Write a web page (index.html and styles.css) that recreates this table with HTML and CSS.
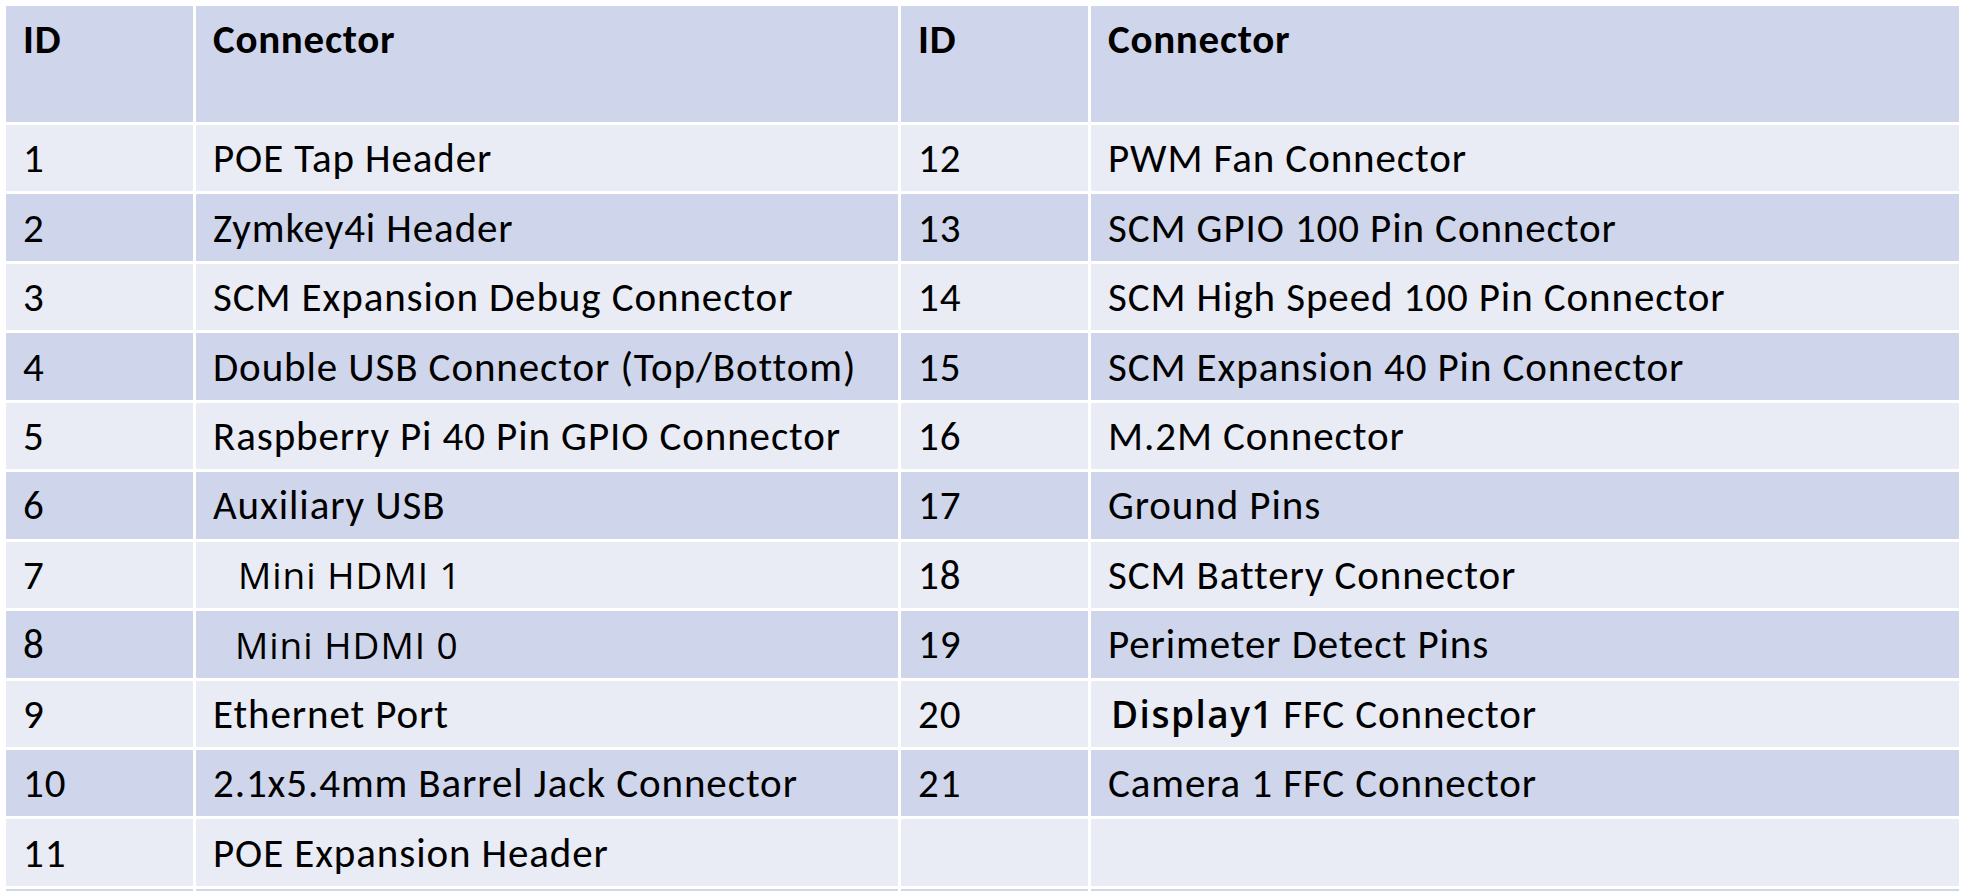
FILE: index.html
```html
<!DOCTYPE html>
<html>
<head>
<meta charset="utf-8">
<link rel="stylesheet" href="styles.css">
</head>
<body>
<div class="table">
  <div class="cell head">ID</div><div class="cell head">Connector</div><div class="cell head">ID</div><div class="cell head">Connector</div>

  <div class="cell light">1</div><div class="cell light">POE Tap Header</div><div class="cell light">12</div><div class="cell light">PWM Fan Connector</div>
  <div class="cell dark">2</div><div class="cell dark">Zymkey4i Header</div><div class="cell dark">13</div><div class="cell dark">SCM GPIO 100 Pin Connector</div>
  <div class="cell light">3</div><div class="cell light">SCM Expansion Debug Connector</div><div class="cell light">14</div><div class="cell light">SCM High Speed 100 Pin Connector</div>
  <div class="cell dark">4</div><div class="cell dark">Double USB Connector (Top/Bottom)</div><div class="cell dark">15</div><div class="cell dark">SCM Expansion 40 Pin Connector</div>
  <div class="cell light">5</div><div class="cell light">Raspberry Pi 40 Pin GPIO Connector</div><div class="cell light">16</div><div class="cell light">M.2M Connector</div>
  <div class="cell dark">6</div><div class="cell dark">Auxiliary USB</div><div class="cell dark">17</div><div class="cell dark">Ground Pins</div>
  <div class="cell light">7</div><div class="cell light"><span class="alt indent"><span class="thin">Mini</span> HDMI 1</span></div><div class="cell light">18</div><div class="cell light">SCM Battery Connector</div>
  <div class="cell dark">8</div><div class="cell dark"><span class="alt indent2"><span class="thin">Mini</span> HDMI 0</span></div><div class="cell dark">19</div><div class="cell dark">Perimeter Detect Pins</div>
  <div class="cell light">9</div><div class="cell light">Ethernet Port</div><div class="cell light">20</div><div class="cell light"><span class="alt2">Display1</span><span>FFC Connector</span></div>
  <div class="cell dark">10</div><div class="cell dark">2.1x5.4mm Barrel Jack Connector</div><div class="cell dark">21</div><div class="cell dark">Camera 1 FFC Connector</div>
  <div class="cell light">11</div><div class="cell light">POE Expansion Header</div><div class="cell light"></div><div class="cell light"></div>
  <div class="cell dark"></div><div class="cell dark"></div><div class="cell dark"></div><div class="cell dark"></div>
</div>
</body>
</html>
```
FILE: styles.css
```css
html, body {
  margin: 0;
  padding: 0;
  background: #ffffff;
  overflow: hidden;
}

body {
  padding: 6px 0 0 6px;
  font-family: "Carlito", "Lato", "Liberation Sans", sans-serif;
  color: #000000;
}

.table {
  display: grid;
  grid-template-columns: 187px 702px 187px 868px;
  grid-template-rows: 116px;
  grid-auto-rows: 66.45px;
  column-gap: 3px;
  row-gap: 3px;
  width: max-content;
}

.cell {
  display: flex;
  align-items: center;
  padding: 0 0 0 17px;
  font-size: 41px;
  letter-spacing: 0.9px;
  white-space: nowrap;
  overflow: hidden;
}

.head {
  background: #cfd5ea;
  align-items: flex-start;
  padding-top: 8px;
  font-weight: bold;
  letter-spacing: 0.7px;
}

.light {
  background: #e9ebf5;
}

.dark {
  background: #cfd5ea;
}

.alt {
  font-family: "Open Sans", "Noto Sans", sans-serif;
  font-size: 37px;
  letter-spacing: 1px;
}

.thin {
  font-weight: 400;
}

.indent {
  padding-left: 25px;
}

.indent2 {
  padding-left: 22px;
}

.alt2 {
  font-family: "Open Sans", "Noto Sans", sans-serif;
  font-size: 37px;
  font-weight: 600;
  letter-spacing: 1.5px;
  margin-left: 3px;
  margin-right: 9px;
}
```
